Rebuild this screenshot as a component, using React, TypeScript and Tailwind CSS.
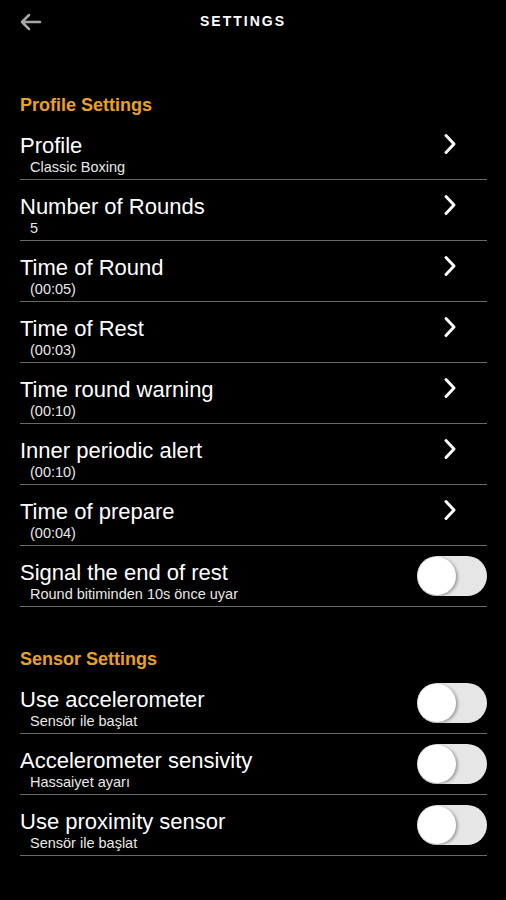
import React from 'react';

interface Item {
  title: string;
  sub: string;
  kind: 'link' | 'toggle';
}

const profileItems: Item[] = [
  { title: 'Profile', sub: 'Classic Boxing', kind: 'link' },
  { title: 'Number of Rounds', sub: '5', kind: 'link' },
  { title: 'Time of Round', sub: '(00:05)', kind: 'link' },
  { title: 'Time of Rest', sub: '(00:03)', kind: 'link' },
  { title: 'Time round warning', sub: '(00:10)', kind: 'link' },
  { title: 'Inner periodic alert', sub: '(00:10)', kind: 'link' },
  { title: 'Time of prepare', sub: '(00:04)', kind: 'link' },
  { title: 'Signal the end of rest', sub: 'Round bitiminden 10s önce uyar', kind: 'toggle' },
];

const sensorItems: Item[] = [
  { title: 'Use accelerometer', sub: 'Sensör ile başlat', kind: 'toggle' },
  { title: 'Accelerometer sensivity', sub: 'Hassaiyet ayarı', kind: 'toggle' },
  { title: 'Use proximity sensor', sub: 'Sensör ile başlat', kind: 'toggle' },
];

function Chevron() {
  return (
    <svg width="14" height="22" viewBox="0 0 14 22" className="mr-[30px] self-start mt-[14px]">
      <polyline points="3,2.5 11,11 3,19.5" fill="none" stroke="#fff" strokeWidth="3" strokeLinecap="round" strokeLinejoin="round" />
    </svg>
  );
}

function Toggle() {
  return (
    <div className="relative h-[40px] w-[70px] rounded-full bg-[#e6e6e6]">
      <div className="absolute left-[1px] top-[1px] h-[38px] w-[38px] rounded-full bg-white shadow-[2px_1px_3px_rgba(0,0,0,0.3)]" />
    </div>
  );
}

function Row({ item }: { item: Item }) {
  return (
    <div className="flex items-center justify-between border-b border-[#6a6a6a] h-[61px]">
      <div className="flex flex-col self-start pt-[14px]">
        <span className="text-[22px] leading-[26px] text-white">{item.title}</span>
        <span className="pl-[10px] text-[14.5px] leading-[17px] text-[#e8e8e8]">{item.sub}</span>
      </div>
      {item.kind === 'link' ? <Chevron /> : <Toggle />}
    </div>
  );
}

function Section({ title, items, className }: { title: string; items: Item[]; className: string }) {
  return (
    <div className={className}>
      <h2 className="text-[18px] font-bold leading-[28px] text-[#e8a124]">{title}</h2>
      <div className="flex flex-col">
        {items.map((it) => (
          <Row key={it.title} item={it} />
        ))}
      </div>
    </div>
  );
}

export default function App() {
  return (
    <div className="h-[900px] w-[506px] bg-black font-['Liberation_Sans',Arial,sans-serif] overflow-hidden">
      <div className="relative flex h-[43px] items-center justify-center pr-[20px]">
        <svg width="23" height="18" viewBox="0 0 23 18" className="absolute left-[19px] top-[13px]">
          <path d="M21 9H3M10 2L3 9l7 7" fill="none" stroke="#a8a8a8" strokeWidth="2.5" strokeLinecap="round" strokeLinejoin="round" />
        </svg>
        <span className="text-[14px] font-bold tracking-[2px] text-white">SETTINGS</span>
      </div>
      <div className="pl-[20px] pr-[19px]">
        <Section title="Profile Settings" items={profileItems} className="mt-[48px]" />
        <Section title="Sensor Settings" items={sensorItems} className="mt-[38px]" />
      </div>
    </div>
  );
}
